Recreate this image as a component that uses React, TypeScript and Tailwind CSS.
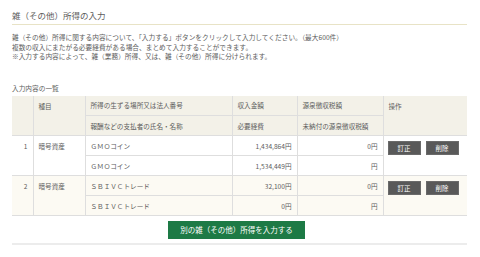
const rows = [
  {
    no: 1,
    kind: "暗号資産",
    place: "ＧＭＯコイン",
    payer: "ＧＭＯコイン",
    income: "1,434,864円",
    cost: "1,534,449円",
    tax: "0円",
    unpaid: "円",
    bg: "bg-white",
  },
  {
    no: 2,
    kind: "暗号資産",
    place: "ＳＢＩＶＣトレード",
    payer: "ＳＢＩＶＣトレード",
    income: "32,100円",
    cost: "0円",
    tax: "0円",
    unpaid: "円",
    bg: "bg-[#fcfaf3]",
  },
];

const cellL = "border-b border-l border-[#dedede] px-[5px] h-[20px] align-middle";
const spanCell = "border-b border-l border-[#dedede] px-[5px] pt-[6px] align-top";

export default function App() {
  return (
    <div
      className="w-[480px] h-[257px] bg-white text-[#5c5c5c] overflow-hidden"
      style={{ fontFamily: '"Noto Sans CJK JP", "Noto Sans", sans-serif' }}
    >
      <div className="ml-[12px] w-[455px]">
        <h1 className="pt-[10px] pb-[4px] text-[8.5px] leading-[10px] font-normal border-b border-[#e8e3c6]">
          雑（その他）所得の入力
        </h1>

        <div className="mt-[8px] text-[6.7px] leading-[9.5px]">
          <p>雑（その他）所得に関する内容について、「入力する」ボタンをクリックして入力してください。（最大600件）</p>
          <p>複数の収入にまたがる必要経費がある場合、まとめて入力することができます。</p>
          <p>※入力する内容によって、雑（業務）所得、又は、雑（その他）所得に分けられます。</p>
        </div>

        <p className="mt-[22px] text-[6.7px] leading-[8px]">入力内容の一覧</p>

        <table className="mt-[4px] w-[455px] table-fixed border-collapse text-[6.6px] leading-[8px]">
          <colgroup>
            <col className="w-[21px]" />
            <col className="w-[52px]" />
            <col className="w-[147px]" />
            <col className="w-[65px]" />
            <col className="w-[86px]" />
            <col className="w-[84px]" />
          </colgroup>
          <thead className="bg-[#f3f1e8]">
            <tr>
              <th rowSpan={2} className="border-b border-[#dedede]" />
              <th rowSpan={2} className={`${spanCell} text-left font-normal`}>種目</th>
              <th className={`${cellL} text-left font-normal`}>所得の生ずる場所又は法人番号</th>
              <th className={`${cellL} text-left font-normal`}>収入金額</th>
              <th className={`${cellL} text-left font-normal`}>源泉徴収税額</th>
              <th rowSpan={2} className={`${spanCell} text-left font-normal`}>操作</th>
            </tr>
            <tr>
              <th className={`${cellL} text-left font-normal`}>報酬などの支払者の氏名・名称</th>
              <th className={`${cellL} text-left font-normal`}>必要経費</th>
              <th className={`${cellL} text-left font-normal`}>未納付の源泉徴収税額</th>
            </tr>
          </thead>
          <tbody>
            {rows.map((r) => (
              <>
                <tr key={`${r.no}a`} className={r.bg}>
                  <td rowSpan={2} className="border-b border-[#dedede] px-[5px] pt-[6px] align-top text-right">
                    {r.no}
                  </td>
                  <td rowSpan={2} className={spanCell}>{r.kind}</td>
                  <td className={cellL}>{r.place}</td>
                  <td className={`${cellL} text-right`}>{r.income}</td>
                  <td className={`${cellL} text-right`}>{r.tax}</td>
                  <td rowSpan={2} className="border-b border-l border-[#dedede] pl-[4px] pt-[5px] align-top">
                    <div className="flex gap-[5px]">
                      <button className="w-[33px] h-[14px] bg-[#595959] border border-[#6a6a6a] text-white text-[6.5px] leading-[12px]">
                        訂正
                      </button>
                      <button className="w-[33px] h-[14px] bg-[#595959] border border-[#6a6a6a] text-white text-[6.5px] leading-[12px]">
                        削除
                      </button>
                    </div>
                  </td>
                </tr>
                <tr key={`${r.no}b`} className={r.bg}>
                  <td className={cellL}>{r.payer}</td>
                  <td className={`${cellL} text-right`}>{r.cost}</td>
                  <td className={`${cellL} text-right`}>{r.unpaid}</td>
                </tr>
              </>
            ))}
          </tbody>
        </table>

        <div className="mt-[5px] flex justify-center pr-[6px]">
          <button className="w-[137px] h-[18px] bg-[#1d7a45] text-white text-[7.5px] leading-[18px]">
            別の雑（その他）所得を入力する
          </button>
        </div>

        <div className="mt-[4px] border-t-2 border-[#ececec]" />
      </div>
    </div>
  );
}
